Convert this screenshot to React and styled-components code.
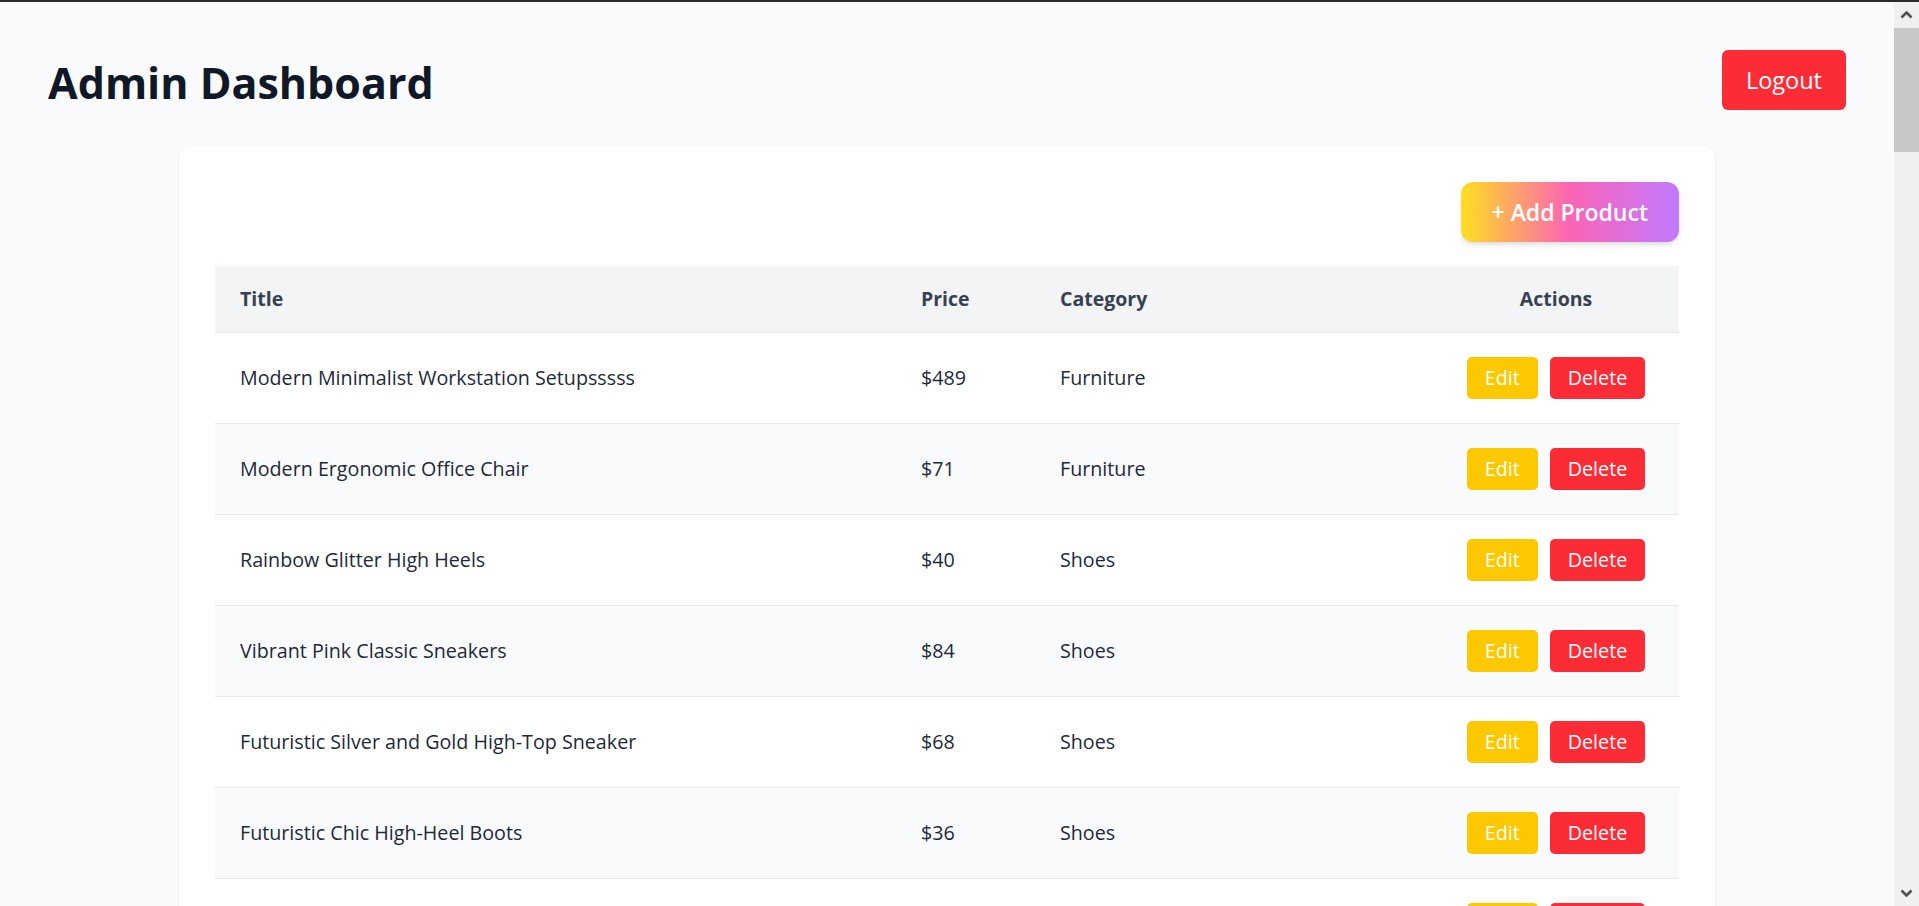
import styled, { createGlobalStyle } from "styled-components";

const GlobalStyle = createGlobalStyle`
  body {
    margin: 0;
    padding-right: 25px;
    background-color: #f9fafb;
    border-top: 2px solid #2c2c2c;
    font-family: "Open Sans", "Noto Sans", sans-serif;
    color: #1e2939;
  }
`;

const Page = styled.div`
  display: flex;
  flex-direction: column;
  gap: 33px;
  padding: 48px 0 0;
`;

const Header = styled.header`
  display: flex;
  justify-content: space-between;
  align-items: flex-start;
  padding: 0 48px;
`;

const Heading = styled.h1`
  margin: 0;
  padding-top: 3px;
  font-size: 43px;
  line-height: 60px;
  font-weight: 700;
  color: #101828;
`;

const LogoutButton = styled.button`
  height: 60px;
  padding: 0 24px;
  border: none;
  border-radius: 6px;
  background-color: #fb2c36;
  color: #ffffff;
  font-family: inherit;
  font-size: 23.5px;
  cursor: pointer;
`;

const Card = styled.main`
  width: 1536px;
  margin: 0 auto;
  padding: 36px;
  box-sizing: border-box;
  background-color: #ffffff;
  border-radius: 12px;
  box-shadow: 0 1px 3px rgba(0, 0, 0, 0.08), 0 1px 2px rgba(0, 0, 0, 0.05);
`;

const Toolbar = styled.div`
  display: flex;
  justify-content: flex-end;
  margin-bottom: 24px;
`;

const AddButton = styled.button`
  height: 60px;
  padding: 0 31px;
  border: none;
  border-radius: 12px;
  background-image: linear-gradient(to right, #ffdf20, #fb64b6, #c27aff);
  color: #ffffff;
  font-family: inherit;
  font-size: 23px;
  font-weight: 600;
  box-shadow: 0 4px 6px -1px rgba(0, 0, 0, 0.1), 0 2px 4px -2px rgba(0, 0, 0, 0.1);
  cursor: pointer;
`;

const Table = styled.table`
  width: 100%;
  border-collapse: collapse;
  table-layout: fixed;
`;

const HeadCell = styled.th`
  width: ${(p) => p.$width || "auto"};
  height: 66px;
  padding: 0 25px;
  box-sizing: border-box;
  background-color: #f3f4f6;
  border-bottom: 1px solid #e5e7eb;
  color: #364153;
  font-size: 19.5px;
  font-weight: 700;
  text-align: ${(p) => (p.$center ? "center" : "left")};
`;

const Row = styled.tr`
  background-color: ${(p) => (p.$striped ? "#f9fafb" : "#ffffff")};
  border-bottom: 1px solid #e5e7eb;
`;

const Cell = styled.td`
  height: 91px;
  padding: 0 25px;
  box-sizing: border-box;
  font-size: 19.7px;
  color: #1e2939;
  text-align: ${(p) => (p.$center ? "center" : "left")};
`;

const Actions = styled.div`
  display: flex;
  justify-content: center;
  gap: 12px;
`;

const ActionButton = styled.button`
  height: 42px;
  padding: 0 18px;
  border: none;
  border-radius: 5px;
  background-color: ${(p) => (p.$danger ? "#fb2c36" : "#fcc800")};
  color: #ffffff;
  font-family: inherit;
  font-size: 19.7px;
  cursor: pointer;
`;

const Scrollbar = styled.div`
  position: fixed;
  top: 2px;
  right: 0;
  bottom: 0;
  width: 25px;
  display: flex;
  flex-direction: column;
  background-color: #f0f0f0;
`;

const ScrollArrow = styled.div`
  height: 26px;
  display: flex;
  align-items: center;
  justify-content: center;
  margin-top: ${(p) => (p.$down ? "auto" : "0")};
`;

const ScrollThumb = styled.div`
  height: 124px;
  background-color: #c8c8c8;
`;

function Chevron({ down }) {
  return (
    <svg width="13" height="8" viewBox="0 0 13 8">
      <path
        d={down ? "M1.5 1.5 L6.5 6.5 L11.5 1.5" : "M1.5 6.5 L6.5 1.5 L11.5 6.5"}
        fill="none"
        stroke="#505050"
        strokeWidth="2.6"
      />
    </svg>
  );
}

const products = [
  { id: 1, title: "Modern Minimalist Workstation Setupsssss", price: 489, category: "Furniture" },
  { id: 2, title: "Modern Ergonomic Office Chair", price: 71, category: "Furniture" },
  { id: 3, title: "Rainbow Glitter High Heels", price: 40, category: "Shoes" },
  { id: 4, title: "Vibrant Pink Classic Sneakers", price: 84, category: "Shoes" },
  { id: 5, title: "Futuristic Silver and Gold High-Top Sneaker", price: 68, category: "Shoes" },
  { id: 6, title: "Futuristic Chic High-Heel Boots", price: 36, category: "Shoes" },
  { id: 7, title: "Elegant Patent Leather Peep-Toe Pumps", price: 53, category: "Shoes" },
  { id: 8, title: "Sleek Wireless Headphone & Inked Earbud Set", price: 44, category: "Electronics" },
];

export default function App() {
  return (
    <>
      <GlobalStyle />
      <Page>
        <Header>
          <Heading>Admin Dashboard</Heading>
          <LogoutButton>Logout</LogoutButton>
        </Header>
        <Card>
          <Toolbar>
            <AddButton>+ Add Product</AddButton>
          </Toolbar>
          <Table>
            <thead>
              <tr>
                <HeadCell $width="681px">Title</HeadCell>
                <HeadCell $width="139px">Price</HeadCell>
                <HeadCell $width="398px">Category</HeadCell>
                <HeadCell $center>Actions</HeadCell>
              </tr>
            </thead>
            <tbody>
              {products.map((product, index) => (
                <Row key={product.id} $striped={index % 2 === 1}>
                  <Cell>{product.title}</Cell>
                  <Cell>${product.price}</Cell>
                  <Cell>{product.category}</Cell>
                  <Cell $center>
                    <Actions>
                      <ActionButton>Edit</ActionButton>
                      <ActionButton $danger>Delete</ActionButton>
                    </Actions>
                  </Cell>
                </Row>
              ))}
            </tbody>
          </Table>
        </Card>
      </Page>
      <Scrollbar>
        <ScrollArrow>
          <Chevron />
        </ScrollArrow>
        <ScrollThumb />
        <ScrollArrow $down>
          <Chevron down />
        </ScrollArrow>
      </Scrollbar>
    </>
  );
}
